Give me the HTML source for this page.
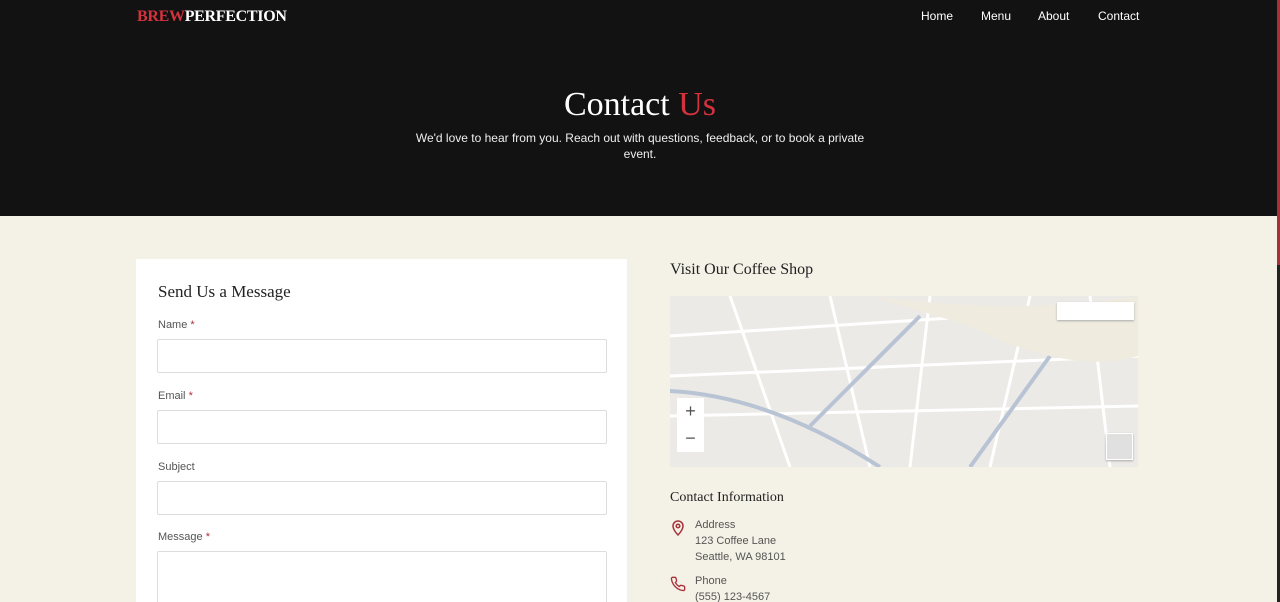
<!DOCTYPE html>
<html style="overflow:hidden;height:602px"><head><meta charset="utf-8"><style>
*{box-sizing:border-box;margin:0;padding:0}
body{width:1280px;height:602px;overflow:hidden;background:#f4f1e6;font-family:"Liberation Sans",sans-serif;position:relative}
.hero{position:absolute;left:0;top:0;width:1280px;height:216px;background:#121212}
.logo{position:absolute;left:137px;top:8px;font-family:"Liberation Serif",serif;font-weight:bold;font-size:16px;color:#fff;letter-spacing:-0.3px}
.logo span{color:#d4323d}
.nav{position:absolute;top:9px;font-size:12px;color:#fff}
h1{position:absolute;left:0;width:1280px;top:86px;text-align:center;font-family:"Liberation Serif",serif;font-weight:normal;font-size:34px;color:#fff}
h1 span{color:#d4323d}
.sub{position:absolute;left:410px;width:460px;top:130px;text-align:center;color:#eee;font-size:12px;line-height:16px}
.card{position:absolute;left:136px;top:259px;width:491px;height:343px;background:#fff;overflow:hidden}
.card h2{position:absolute;left:22px;top:23px;font-family:"Liberation Serif",serif;font-weight:normal;font-size:17px;color:#222}
.lbl{position:absolute;left:22px;font-size:11px;color:#555}
.lbl b{color:#b03040;font-weight:normal}
.inp{position:absolute;left:21px;width:450px;height:34px;border:1px solid #ddd;border-radius:2px}
.h3{position:absolute;left:670px;font-family:"Liberation Serif",serif;color:#222}
.map{position:absolute;left:670px;top:296px;width:468px;height:171px;background:#eceae6;overflow:hidden}
.t{position:absolute;font-size:11px;color:#555}
.sb{position:absolute;right:0;top:0;width:3px;height:602px;background:#222}
.sb i{position:absolute;left:0;top:0;width:3px;height:265px;background:#a83038}
</style></head><body>
<div class="hero">
<div class="logo"><span>BREW</span>PERFECTION</div>
<div class="nav" style="left:921px">Home</div>
<div class="nav" style="left:981px">Menu</div>
<div class="nav" style="left:1038px">About</div>
<div class="nav" style="left:1098px">Contact</div>
<h1>Contact <span>Us</span></h1>
<div class="sub">We'd love to hear from you. Reach out with questions, feedback, or to book a private event.</div>
</div>
<div class="card">
<h2>Send Us a Message</h2>
<div class="lbl" style="top:60px">Name <b>*</b></div><div class="inp" style="top:80px"></div>
<div class="lbl" style="top:131px">Email <b>*</b></div><div class="inp" style="top:151px"></div>
<div class="lbl" style="top:202px">Subject</div><div class="inp" style="top:222px"></div>
<div class="lbl" style="top:272px">Message <b>*</b></div><div class="inp" style="top:292px;height:80px"></div>
</div>
<div class="h3" style="top:261px;font-size:16px">Visit Our Coffee Shop</div>
<div class="map">
<svg width="468" height="171" style="position:absolute;left:0;top:0">
<g stroke="#fff" stroke-width="3" fill="none">
<path d="M0 40 L468 10"/><path d="M0 80 L468 60"/><path d="M0 120 L468 110"/><path d="M60 0 L120 171"/><path d="M160 0 L200 171"/><path d="M260 0 L240 171"/><path d="M360 0 L320 171"/><path d="M420 0 L440 171"/>
</g>
<g stroke="#b8c4d4" stroke-width="4" fill="none"><path d="M0 95 Q100 100 210 171"/><path d="M140 130 L250 20"/><path d="M300 171 L380 60"/></g>
<path d="M200 0 Q350 20 468 0 L468 60 Q400 80 300 30Z" fill="#f0ebdf"/>
</svg>
<div style="position:absolute;left:387px;top:6px;width:77px;height:18px;background:#fff;box-shadow:0 1px 2px #aaa"></div>
<div style="position:absolute;left:7px;top:102px;width:27px;height:54px;background:#fff;font-size:18px;color:#555;text-align:center;line-height:27px">+<br>−</div>
<div style="position:absolute;left:436px;top:137px;width:27px;height:27px;background:#e0e0e0;border:1px solid #fff;box-shadow:0 1px 2px #aaa"></div>
</div>
<div class="h3" style="top:490px;font-size:14px">Contact Information</div>
<svg style="position:absolute;left:670px;top:520px" width="16" height="16" viewBox="0 0 16 16" fill="none" stroke="#a83038" stroke-width="1.5"><path d="M8 15s5-5 5-9A5 5 0 0 0 3 6c0 4 5 9 5 9z"/><circle cx="8" cy="6" r="1.8"/></svg>
<div class="t" style="left:695px;top:519px">Address</div>
<div class="t" style="left:695px;top:535px">123 Coffee Lane</div>
<div class="t" style="left:695px;top:551px">Seattle, WA 98101</div>
<svg style="position:absolute;left:670px;top:576px" width="16" height="16" viewBox="0 0 24 24" fill="none" stroke="#a83038" stroke-width="2"><path d="M22 16.9v3a2 2 0 0 1-2.2 2 19.8 19.8 0 0 1-8.6-3.1 19.5 19.5 0 0 1-6-6A19.8 19.8 0 0 1 2.1 4.2 2 2 0 0 1 4.1 2h3a2 2 0 0 1 2 1.7c.1 1 .4 1.9.7 2.8a2 2 0 0 1-.5 2.1L8 9.8a16 16 0 0 0 6 6l1.3-1.3a2 2 0 0 1 2.1-.4c.9.3 1.8.6 2.8.7a2 2 0 0 1 1.7 2z"/></svg>
<div class="t" style="left:695px;top:575px">Phone</div>
<div class="t" style="left:695px;top:591px">(555) 123-4567</div>
<div class="sb"><i></i></div>
</body></html>
